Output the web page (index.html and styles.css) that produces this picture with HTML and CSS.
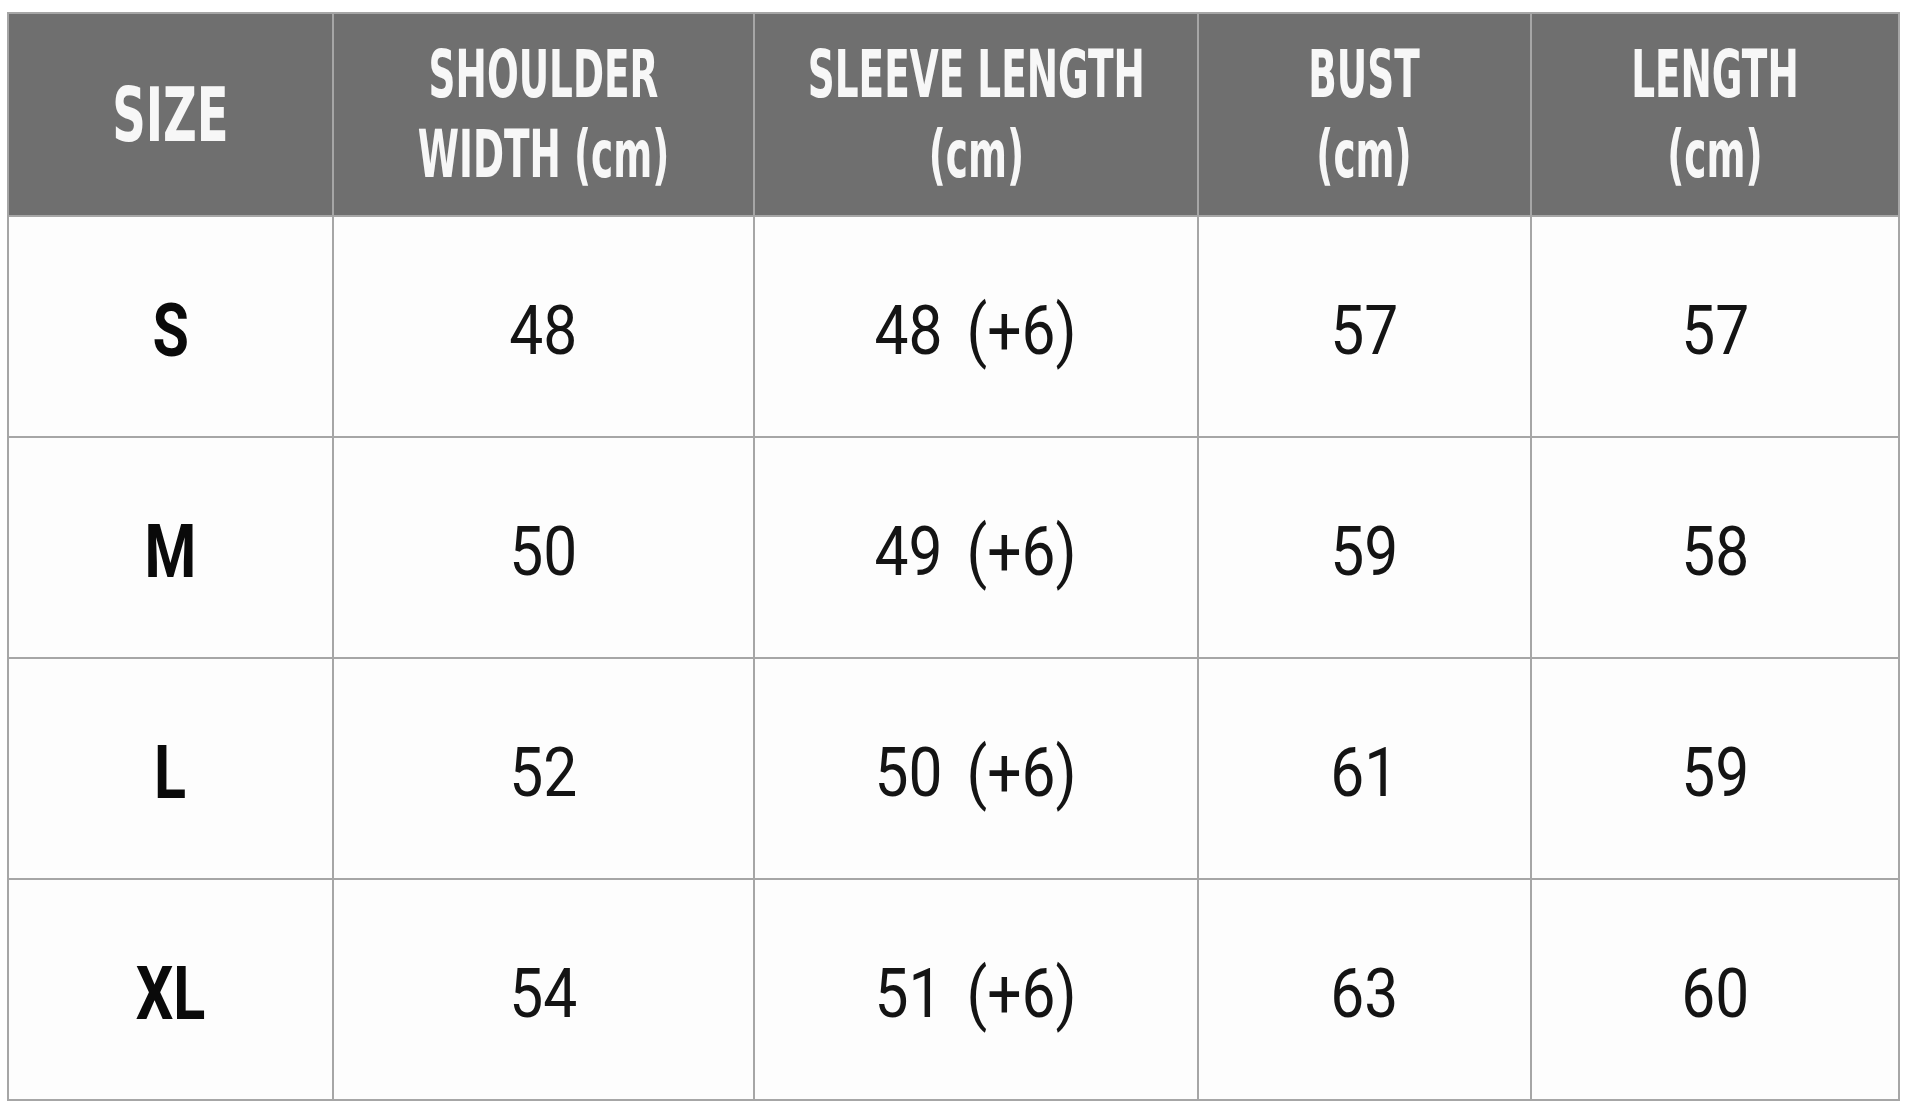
FILE: index.html
```html
<!DOCTYPE html>
<html lang="en">
<head>
<meta charset="utf-8">
<title>Size Chart</title>
<link rel="stylesheet" href="styles.css">
</head>
<body>
<table class="chart">
  <colgroup>
    <col class="c1"><col class="c2"><col class="c3"><col class="c4"><col class="c5">
  </colgroup>
  <thead>
    <tr class="head">
      <th><span class="hd big">SIZE</span></th>
      <th><span class="hd">SHOULDER<br>WIDTH (cm)</span></th>
      <th><span class="hd">SLEEVE LENGTH<br>(cm)</span></th>
      <th><span class="hd">BUST<br>(cm)</span></th>
      <th><span class="hd">LENGTH<br>(cm)</span></th>
    </tr>
  </thead>
  <tbody>
    <tr><td class="sz"><span class="v">S</span></td><td><span class="v">48</span></td><td><span class="v">48 (+6)</span></td><td><span class="v">57</span></td><td><span class="v">57</span></td></tr>
    <tr><td class="sz"><span class="v">M</span></td><td><span class="v">50</span></td><td><span class="v">49 (+6)</span></td><td><span class="v">59</span></td><td><span class="v">58</span></td></tr>
    <tr><td class="sz"><span class="v">L</span></td><td><span class="v">52</span></td><td><span class="v">50 (+6)</span></td><td><span class="v">61</span></td><td><span class="v">59</span></td></tr>
    <tr><td class="sz"><span class="v">XL</span></td><td><span class="v">54</span></td><td><span class="v">51 (+6)</span></td><td><span class="v">63</span></td><td><span class="v">60</span></td></tr>
  </tbody>
</table>
</body>
</html>
```
FILE: styles.css
```css
html, body {
  margin: 0;
  padding: 0;
  background: #ffffff;
}
body {
  padding: 12px 0 0 7px;
}
.chart {
  border-collapse: collapse;
  table-layout: fixed;
  width: 1891px;
  border: 2px solid #8e8e8e;
}
.c1 { width: 325px; }
.c2 { width: 421px; }
.c3 { width: 444px; }
.c4 { width: 333px; }
.c5 { width: 368px; }
.chart th, .chart td {
  border: 2px solid #a6a6a6;
  padding: 0;
  text-align: center;
  vertical-align: middle;
}
.head th {
  background: #6f6f6f;
  height: 201px;
  color: #f7f7f7;
  font-family: "DejaVu Sans Condensed", "DejaVu Sans", sans-serif;
  font-weight: bold;
}
.hd {
  display: inline-block;
  margin: 0 -80px;
  font-size: 65px;
  line-height: 80px;
  transform: scaleX(0.64);
  white-space: nowrap;
}
.hd.big {
  font-size: 75px;
  transform: scaleX(0.69);
}
.chart td {
  height: 221px;
  padding-top: 8px;
  box-sizing: border-box;
  background: #fdfdfd;
  color: #141414;
  font-family: "Roboto", "Liberation Sans", sans-serif;
  font-size: 68px;
}
.v {
  display: inline-block;
  white-space: nowrap;
  word-spacing: 10px;
  transform: scaleX(0.89);
}
.chart td.sz {
  font-weight: bold;
  font-size: 74px;
  color: #0a0a0a;
}
.sz .v {
  transform: scaleX(0.8);
}
```
